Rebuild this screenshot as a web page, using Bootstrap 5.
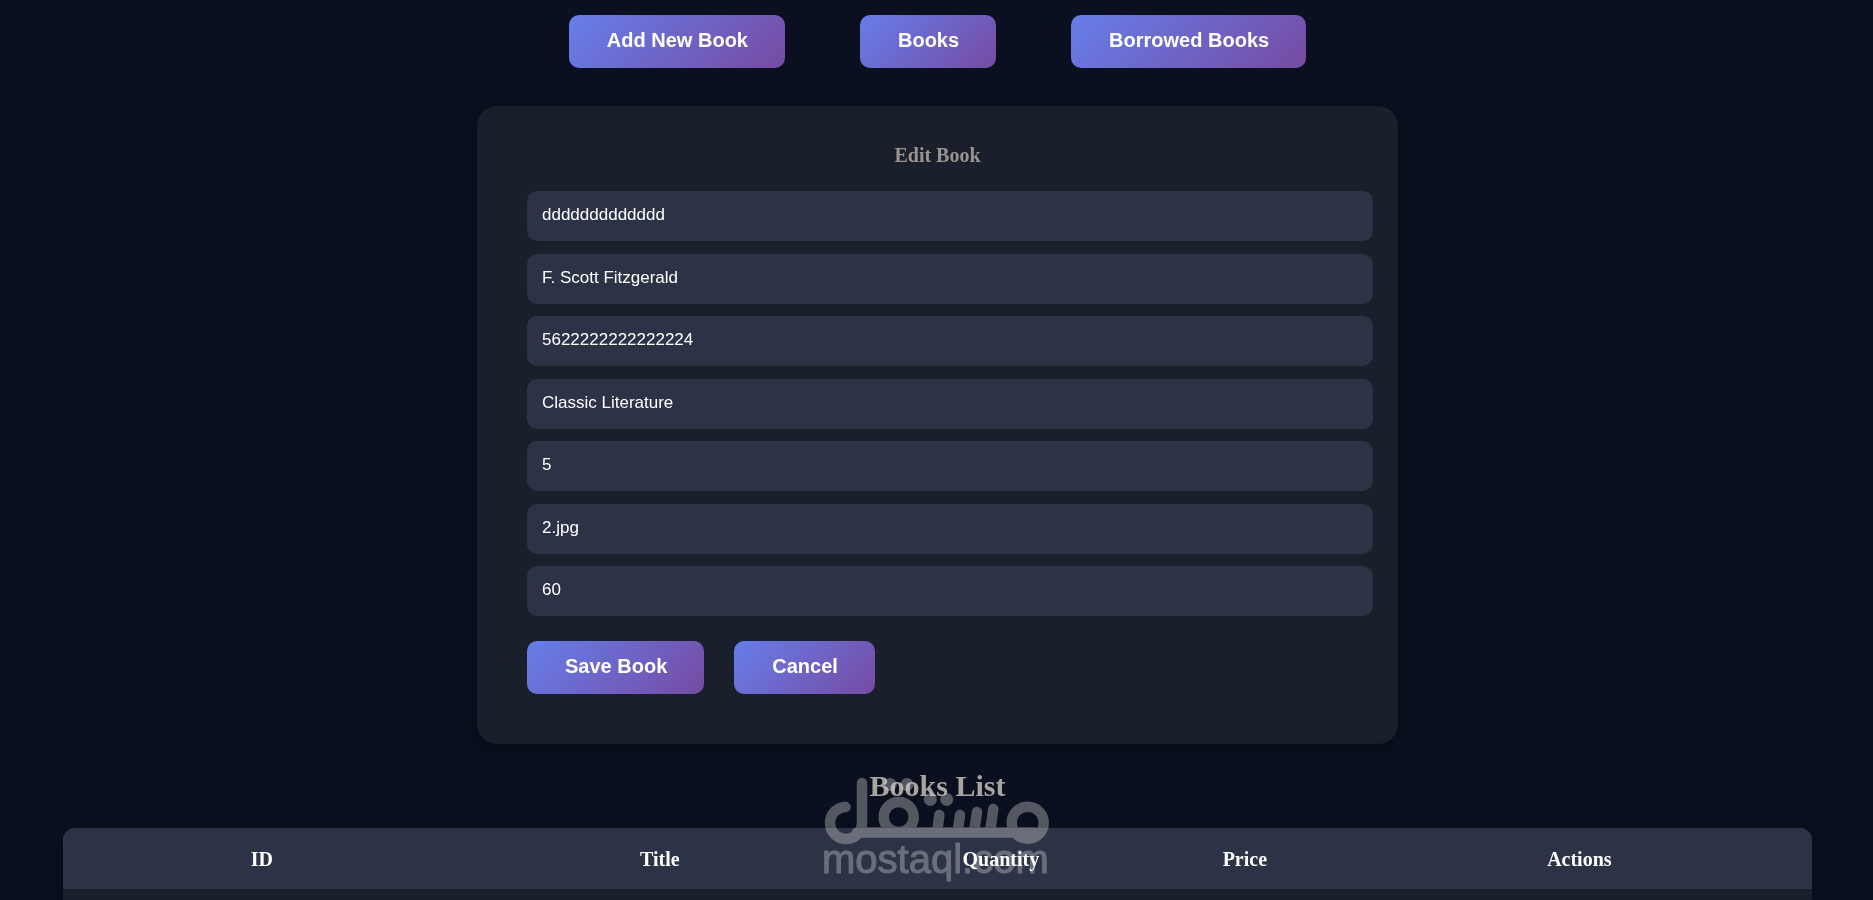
<!DOCTYPE html>
<html lang="en">
<head>
<meta charset="utf-8">
<meta name="viewport" content="width=device-width, initial-scale=1">
<title>Edit Book</title>
<link href="https://cdn.jsdelivr.net/npm/bootstrap@5.3.0/dist/css/bootstrap.min.css" rel="stylesheet">
<style>
body{background:#0a101f;font-family:"Liberation Serif","Times New Roman",serif;color:#fff}
.page{height:100vh;padding:15px 61px 0 63px}
.top-nav{gap:75px}
.btn-grad{height:53px;padding:0 37px 3px 38px;border:0;border-radius:10px;background:linear-gradient(135deg,#667eea 0%,#764ba2 100%);color:#fff;font:bold 20px/24px "Liberation Sans",Arial,sans-serif}
.btn-grad:hover{color:#fff;filter:brightness(1.1)}
.edit-card{max-width:921px;width:100%;margin-top:38px;padding:37px 25px 50px 50px;border-radius:20px;background:#1a1f2c;box-shadow:0 5px 19px rgba(0,0,0,.3)}
.edit-card h1{font-size:20px;line-height:24px;font-weight:bold;color:#999490;margin:0 25px 24px 0}
.fields{height:425px}
.field{height:50px;padding:0 15px 2px;border:0;border-radius:10px;background:#2d3347;color:#fff;font:17px/20px "Liberation Sans",Arial,sans-serif}
.field:focus{background:#2d3347;color:#fff}
.actions{gap:30px;margin-top:25px}
.list-title{font-size:30px;line-height:36px;font-weight:bold;color:#a8a5a0;margin:24px 0}
.books{border-radius:12px 12px 0 0;background:#1a1f2c;box-shadow:0 5px 19px rgba(0,0,0,.3)}
.books table{table-layout:fixed;width:100%}
.books th{height:61px;background:#2d3347;font-size:20px;line-height:24px;font-weight:bold;text-align:center}
.watermark{top:0;left:50%;margin-left:-124px;mix-blend-mode:lighten;opacity:.37;pointer-events:none;font-family:"Liberation Sans",Arial,sans-serif}
</style>
</head>
<body>
<div class="page d-flex flex-column align-items-center overflow-hidden">
  <nav class="top-nav d-flex justify-content-center">
    <button type="button" class="btn btn-grad">Add New Book</button>
    <button type="button" class="btn btn-grad">Books</button>
    <button type="button" class="btn btn-grad">Borrowed Books</button>
  </nav>

  <form class="edit-card">
    <h1 class="text-center">Edit Book</h1>
    <div class="fields d-flex flex-column justify-content-between">
      <input class="form-control field" type="text" aria-label="Title" value="ddddddddddddd">
      <input class="form-control field" type="text" aria-label="Author" value="F. Scott Fitzgerald">
      <input class="form-control field" type="text" aria-label="ISBN" value="5622222222222224">
      <input class="form-control field" type="text" aria-label="Category" value="Classic Literature">
      <input class="form-control field" type="text" aria-label="Quantity" value="5">
      <input class="form-control field" type="text" aria-label="Image" value="2.jpg">
      <input class="form-control field" type="text" aria-label="Price" value="60">
    </div>
    <div class="actions d-flex">
      <button type="button" class="btn btn-grad">Save Book</button>
      <button type="button" class="btn btn-grad">Cancel</button>
    </div>
  </form>

  <section class="w-100 flex-fill d-flex flex-column position-relative">
    <h2 class="list-title text-center">Books List</h2>
    <div class="books flex-fill overflow-hidden">
      <table>
        <colgroup>
          <col style="width:22.75%"><col style="width:22.75%"><col style="width:16.25%"><col style="width:11.65%"><col style="width:26.6%">
        </colgroup>
        <thead>
          <tr><th scope="col">ID</th><th scope="col">Title</th><th scope="col">Quantity</th><th scope="col">Price</th><th scope="col">Actions</th></tr>
        </thead>
      </table>
    </div>
    <svg class="watermark position-absolute" width="246" height="156" viewBox="814 744 246 156" aria-hidden="true">
      <g fill="none" stroke="#d4d4d4" stroke-width="10.500" stroke-linecap="round">
        <path d="M845.500 807a16 16 0 1 0 16.500 16V783"/>
        <path d="M857 832.500H1035"/>
        <circle cx="898.700" cy="817" r="15"/>
        <circle cx="1027.700" cy="822.700" r="16"/>
        <path d="M937.500 829l1.800-14M958 829l2-14M974.500 829l2.500-17M990.500 829l2.800-20"/>
      </g>
      <g fill="#d4d4d4">
        <circle cx="890.300" cy="784.500" r="6.500"/><circle cx="907" cy="784.500" r="6.500"/>
        <circle cx="930.300" cy="799.500" r="6.500"/><circle cx="946.700" cy="799.500" r="6.500"/>
        <text x="822" y="873" font-size="40" stroke="#d4d4d4" stroke-width="1" stroke-linejoin="round">mostaql.com</text>
      </g>
    </svg>
  </section>
</div>
<script src="https://cdn.jsdelivr.net/npm/bootstrap@5.3.0/dist/js/bootstrap.bundle.min.js"></script>
</body>
</html>
